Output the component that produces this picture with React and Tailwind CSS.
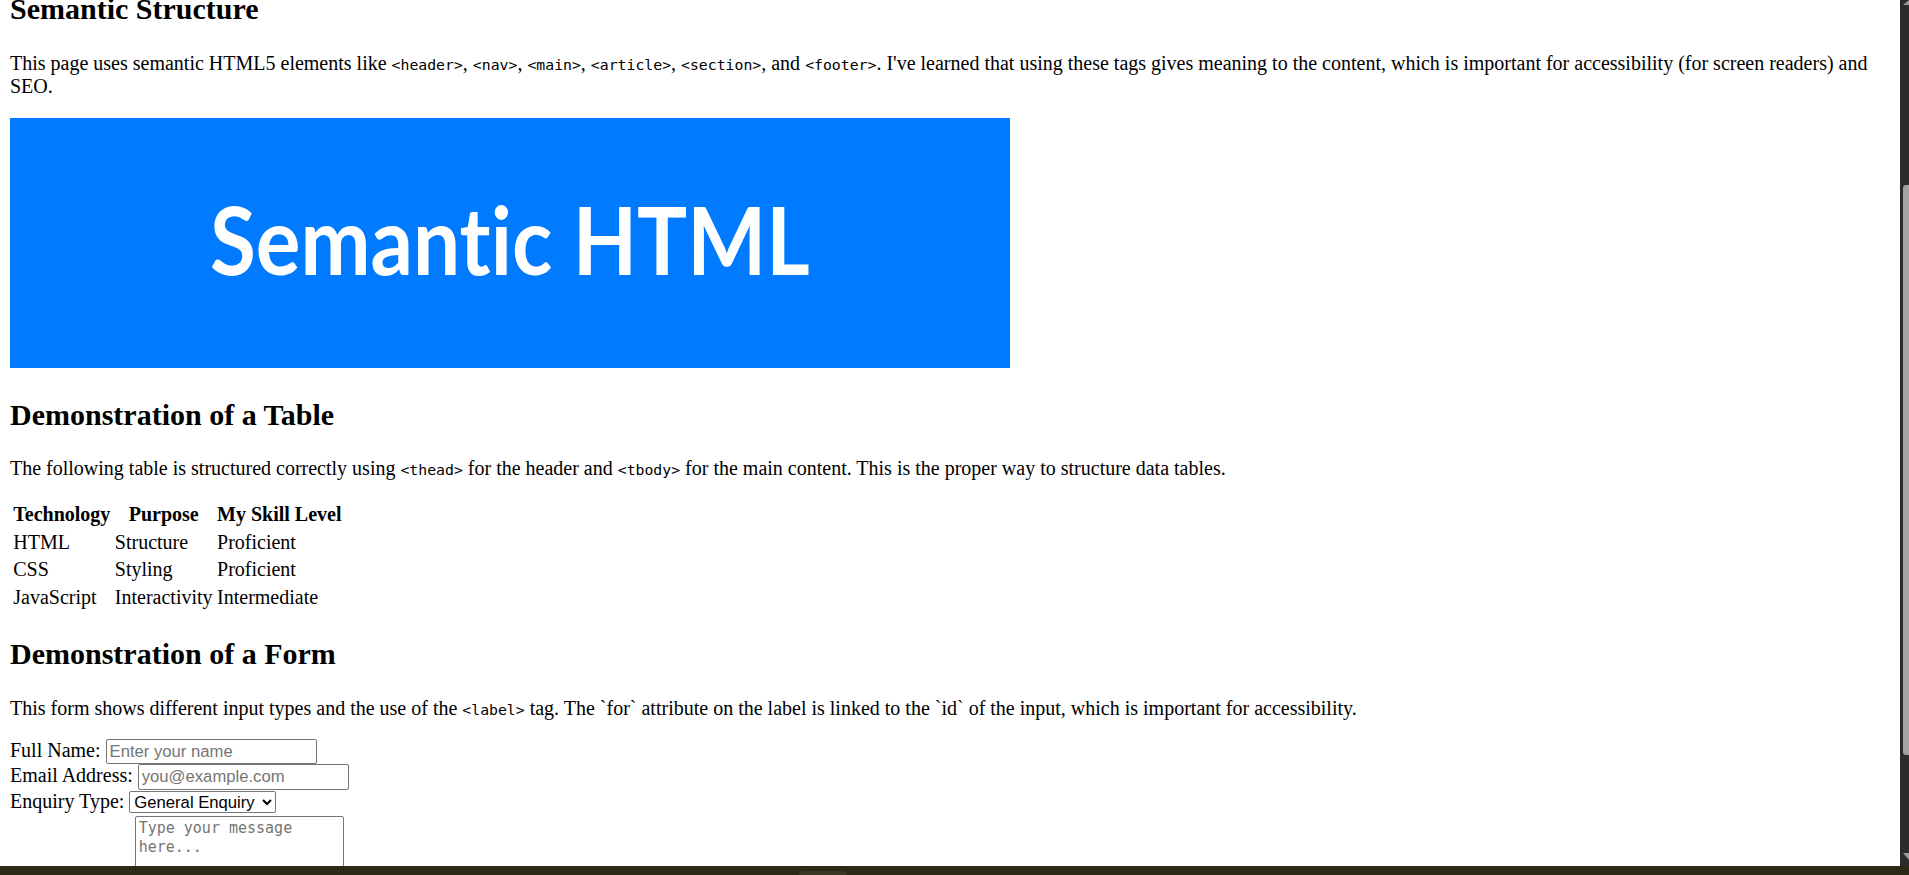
import React from 'react';

const Code = ({ children }) => (
  <code className="font-['DejaVu_Sans_Mono',monospace] text-[14.8px] leading-[14px]">{children}</code>
);

const App = () => {
  const rows = [
    ['HTML', 'Structure', 'Proficient'],
    ['CSS', 'Styling', 'Proficient'],
    ['JavaScript', 'Interactivity', 'Intermediate'],
  ];

  return (
    <div className="h-[875px] flex flex-col overflow-hidden bg-white">
      <div className="flex flex-1 min-h-0">
        {/* Page content */}
        <main className="flex-1 min-w-0 overflow-hidden px-[10px] font-['Liberation_Serif',serif] text-[20px] leading-[23px] text-black">
          <h2 className="mt-[-8px] mb-[25px] text-[30px] leading-[34.5px] font-bold">Semantic Structure</h2>
          <p className="mb-[20px]">
            This page uses semantic HTML5 elements like <Code>&lt;header&gt;</Code>, <Code>&lt;nav&gt;</Code>,{' '}
            <Code>&lt;main&gt;</Code>, <Code>&lt;article&gt;</Code>, <Code>&lt;section&gt;</Code>, and{' '}
            <Code>&lt;footer&gt;</Code>. I've learned that using these tags gives meaning to the content, which is
            important for accessibility (for screen readers) and SEO.
          </p>

          {/* Placeholder banner */}
          <div className="mb-[30px] w-[1000px] h-[250px] bg-[#007bff] flex items-center justify-center pb-[8px]">
            <span className="font-['Lato',sans-serif] font-bold text-[94px] leading-none text-white [font-variant-ligatures:none] scale-x-[0.89]">
              Semantic HTML
            </span>
          </div>

          <h2 className="mb-[25px] text-[30px] leading-[34.5px] font-bold">Demonstration of a Table</h2>
          <p className="mb-[20px]">
            The following table is structured correctly using <Code>&lt;thead&gt;</Code> for the header and{' '}
            <Code>&lt;tbody&gt;</Code> for the main content. This is the proper way to structure data tables.
          </p>

          <table className="border-separate border-spacing-[2.5px] mb-[25px]">
            <thead>
              <tr>
                <th className="p-[1.25px] font-bold text-center">Technology</th>
                <th className="p-[1.25px] font-bold text-center">Purpose</th>
                <th className="p-[1.25px] font-bold text-center">My Skill Level</th>
              </tr>
            </thead>
            <tbody>
              {rows.map((r) => (
                <tr key={r[0]}>
                  {r.map((c) => (
                    <td key={c} className="p-[1.25px] text-left">{c}</td>
                  ))}
                </tr>
              ))}
            </tbody>
          </table>

          <h2 className="mb-[25px] text-[30px] leading-[34.5px] font-bold">Demonstration of a Form</h2>
          <p className="mb-[19px]">
            This form shows different input types and the use of the <Code>&lt;label&gt;</Code> tag. The `for`
            attribute on the label is linked to the `id` of the input, which is important for accessibility.
          </p>

          <form>
            <label htmlFor="name">Full Name:</label>{' '}
            <input
              id="name"
              type="text"
              placeholder="Enter your name"
              className="w-[211px] h-[25px] px-[3px] border border-[#767676] rounded-[2px] font-['Liberation_Sans',sans-serif] text-[16.67px] placeholder:text-[#757575]"
            />
            <br />
            <label htmlFor="email">Email Address:</label>{' '}
            <input
              id="email"
              type="email"
              placeholder="you@example.com"
              className="w-[211px] h-[26px] px-[3px] border border-[#767676] rounded-[2px] font-['Liberation_Sans',sans-serif] text-[16.67px] placeholder:text-[#757575]"
            />
            <br />
            <label htmlFor="type">Enquiry Type:</label>{' '}
            <select
              id="type"
              defaultValue="general"
              className="w-[147px] h-[22px] mt-[1px] border border-[#767676] rounded-[2px] font-['Liberation_Sans',sans-serif] text-[16.67px] text-black"
            >
              <option value="general">General Enquiry</option>
              <option value="support">Support</option>
              <option value="feedback">Feedback</option>
            </select>
            <br />
            <label htmlFor="message">Your Message:</label>{' '}
            <textarea
              id="message"
              rows={5}
              placeholder="Type your message here..."
              className="w-[209px] h-[110px] mt-[3px] px-[3px] py-[2px] align-baseline border border-[#767676] rounded-[2px] font-['DejaVu_Sans_Mono',monospace] text-[15px] leading-[19px] resize-none placeholder:text-[#757575]"
            />
          </form>
        </main>

        {/* Scrollbar */}
        <div className="w-[9px] shrink-0 bg-[#2b2b2b] flex flex-col items-end">
          <div className="w-0 h-0 border-l-[6px] border-l-transparent border-b-[5px] border-b-[#9a9a9a]" />
          <div className="mt-[180px] h-[570px] w-[6px] bg-[#a3a3a3] rounded-bl-[3px] rounded-tl-[3px]" />
          <div className="mt-auto mb-[6px] w-0 h-0 border-l-[6px] border-l-transparent border-t-[7px] border-t-[#9a9a9a]" />
        </div>
      </div>

      {/* Bottom strip */}
      <div className="h-[9px] shrink-0 bg-[#2c2916] pl-[799px] pt-[5px]">
        <div className="w-[48px] h-[4px] bg-[#3b3726] rounded-t-[4px]" />
      </div>
    </div>
  );
};

export default App;
